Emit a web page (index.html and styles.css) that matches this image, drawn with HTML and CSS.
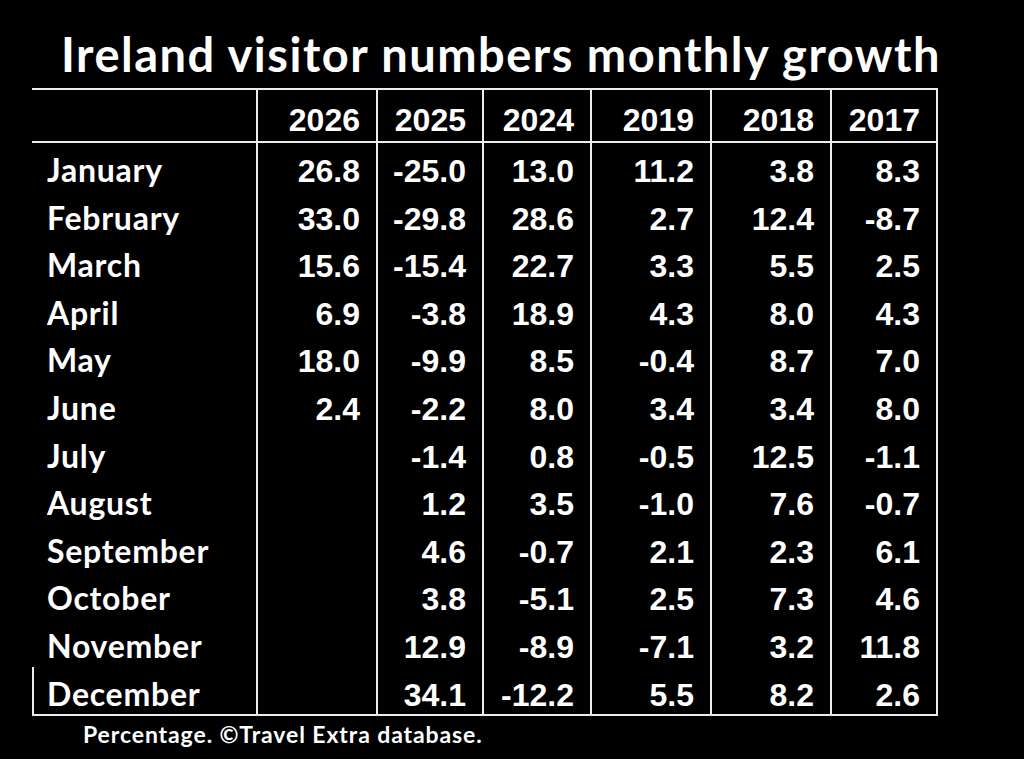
FILE: index.html
```html
<!DOCTYPE html>
<html lang="en">
<head>
<meta charset="utf-8">
<title>Ireland visitor numbers monthly growth</title>
<link rel="stylesheet" href="styles.css">
</head>
<body>
<main class="page">
  <h1 class="title">Ireland visitor numbers monthly growth</h1>
  <table class="growth">
    <colgroup>
      <col class="c-month"><col class="c-wide"><col class="c-narrow"><col class="c-mid"><col class="c-wide"><col class="c-wide"><col class="c-narrow">
    </colgroup>
    <thead>
      <tr><th class="month"></th><th>2026</th><th>2025</th><th>2024</th><th>2019</th><th>2018</th><th>2017</th></tr>
    </thead>
    <tbody>
      <tr><td class="month">January</td><td>26.8</td><td>-25.0</td><td>13.0</td><td>11.2</td><td>3.8</td><td>8.3</td></tr>
      <tr><td class="month">February</td><td>33.0</td><td>-29.8</td><td>28.6</td><td>2.7</td><td>12.4</td><td>-8.7</td></tr>
      <tr><td class="month">March</td><td>15.6</td><td>-15.4</td><td>22.7</td><td>3.3</td><td>5.5</td><td>2.5</td></tr>
      <tr><td class="month">April</td><td>6.9</td><td>-3.8</td><td>18.9</td><td>4.3</td><td>8.0</td><td>4.3</td></tr>
      <tr><td class="month">May</td><td>18.0</td><td>-9.9</td><td>8.5</td><td>-0.4</td><td>8.7</td><td>7.0</td></tr>
      <tr><td class="month">June</td><td>2.4</td><td>-2.2</td><td>8.0</td><td>3.4</td><td>3.4</td><td>8.0</td></tr>
      <tr><td class="month">July</td><td></td><td>-1.4</td><td>0.8</td><td>-0.5</td><td>12.5</td><td>-1.1</td></tr>
      <tr><td class="month">August</td><td></td><td>1.2</td><td>3.5</td><td>-1.0</td><td>7.6</td><td>-0.7</td></tr>
      <tr><td class="month">September</td><td></td><td>4.6</td><td>-0.7</td><td>2.1</td><td>2.3</td><td>6.1</td></tr>
      <tr><td class="month">October</td><td></td><td>3.8</td><td>-5.1</td><td>2.5</td><td>7.3</td><td>4.6</td></tr>
      <tr><td class="month">November</td><td></td><td>12.9</td><td>-8.9</td><td>-7.1</td><td>3.2</td><td>11.8</td></tr>
      <tr class="last"><td class="month">December</td><td></td><td>34.1</td><td>-12.2</td><td>5.5</td><td>8.2</td><td>2.6</td></tr>
    </tbody>
  </table>
  <p class="source">Percentage. ©Travel Extra database.</p>
</main>
</body>
</html>
```

FILE: styles.css
```css
html, body {
  margin: 0;
  padding: 0;
  background: #000;
}

body {
  width: 1024px;
  height: 759px;
  overflow: hidden;
  color: #fff;
  font-family: "Liberation Sans", Arial, sans-serif;
}

.page {
  padding-left: 32px;
}

.title {
  margin: 0;
  padding: 31px 0 0 29px;
  height: 88px;
  box-sizing: border-box;
  font-family: Lato, "Open Sans", sans-serif;
  font-weight: 700;
  font-size: 47px;
  line-height: 47px;
  letter-spacing: 1.5px;
  white-space: nowrap;
}

.growth {
  table-layout: fixed;
  width: 906px;
  border-collapse: separate;
  border-spacing: 0;
}

.c-month { width: 226px; }
.c-wide { width: 120px; }
.c-narrow { width: 106px; }
.c-mid { width: 108px; }

.growth tr {
  height: 47.6px;
}

.growth thead tr {
  height: 55px;
}

.growth .last {
  height: 49.6px;
}

.growth th,
.growth td {
  box-sizing: border-box;
  border-right: 2px solid #ececec;
  text-align: right;
  padding: 9px 16px 0 0;
  font-family: "Liberation Sans", Arial, sans-serif;
  font-weight: 700;
  font-size: 32px;
  line-height: 38px;
  vertical-align: top;
  white-space: nowrap;
}

.growth th {
  border-top: 2px solid #ececec;
  border-bottom: 2px solid #ececec;
  padding-top: 11px;
}

.growth .month {
  text-align: left;
  padding-top: 8px;
  padding-left: 15px;
  padding-right: 0;
  font-family: Lato, "Open Sans", sans-serif;
  font-size: 32px;
  letter-spacing: 0.75px;
}

.growth .last td {
  border-bottom: 2px solid #ececec;
}

.growth .last .month {
  border-left: 2px solid #ececec;
  padding-left: 13px;
}

.source {
  margin: 6px 0 0 51px;
  font-family: Lato, "Open Sans", sans-serif;
  font-weight: 700;
  font-size: 23px;
  line-height: 24px;
  letter-spacing: 0.9px;
}
```
